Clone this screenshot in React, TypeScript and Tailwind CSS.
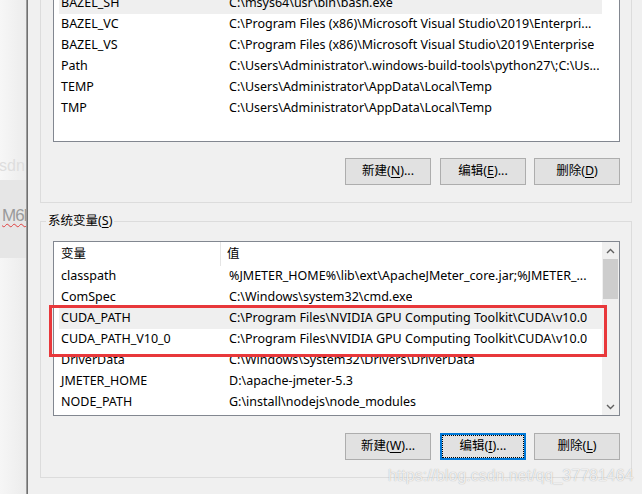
import React from "react";

const UI = "font-['Noto_Sans','Noto_Sans_CJK_SC',sans-serif] text-[12.5px] text-black";

const userVars = [
  { name: "BAZEL_SH", value: "C:\\msys64\\usr\\bin\\bash.exe", hl: true },
  { name: "BAZEL_VC", value: "C:\\Program Files (x86)\\Microsoft Visual Studio\\2019\\Enterpri..." },
  { name: "BAZEL_VS", value: "C:\\Program Files (x86)\\Microsoft Visual Studio\\2019\\Enterprise" },
  { name: "Path", value: "C:\\Users\\Administrator\\.windows-build-tools\\python27\\;C:\\Us..." },
  { name: "TEMP", value: "C:\\Users\\Administrator\\AppData\\Local\\Temp" },
  { name: "TMP", value: "C:\\Users\\Administrator\\AppData\\Local\\Temp" },
];

const sysVars = [
  { name: "classpath", value: "%JMETER_HOME%\\lib\\ext\\ApacheJMeter_core.jar;%JMETER_..." },
  { name: "ComSpec", value: "C:\\Windows\\system32\\cmd.exe" },
  { name: "CUDA_PATH", value: "C:\\Program Files\\NVIDIA GPU Computing Toolkit\\CUDA\\v10.0", hl: true },
  { name: "CUDA_PATH_V10_0", value: "C:\\Program Files\\NVIDIA GPU Computing Toolkit\\CUDA\\v10.0" },
  { name: "DriverData", value: "C:\\Windows\\System32\\Drivers\\DriverData" },
  { name: "JMETER_HOME", value: "D:\\apache-jmeter-5.3" },
  { name: "NODE_PATH", value: "G:\\install\\nodejs\\node_modules" },
];

function Row({ name, value, hl }: { name: string; value: string; hl?: boolean }) {
  return (
    <div className={`flex h-[21px] items-center ml-[5px] whitespace-nowrap ${hl ? "bg-[#efefef]" : ""}`}>
      <span className="w-[170px] shrink-0 pl-[2px]">{name}</span>
      <span className="overflow-hidden">{value}</span>
    </div>
  );
}

function Btn({ label, k, rest, focused }: { label: string; k: string; rest: string; focused?: boolean }) {
  const text = (
    <span>
      {label}(<span className="underline underline-offset-2">{k}</span>){rest}
    </span>
  );
  if (focused) {
    return (
      <div className="w-[86px] h-[27px] border-2 border-[#0078d7] bg-[#e1e1e1]">
        <div className="h-full w-full border border-dotted border-black flex items-center justify-center">{text}</div>
      </div>
    );
  }
  return (
    <div className="w-[86px] h-[27px] border border-[#adadad] bg-[#e1e1e1] flex items-center justify-center">{text}</div>
  );
}

function Chevron({ up }: { up?: boolean }) {
  return (
    <svg width="9" height="6" viewBox="0 0 9 6">
      <polyline
        points={up ? "1,5 4.5,1.5 8,5" : "1,1 4.5,4.5 8,1"}
        fill="none"
        stroke="#606060"
        strokeWidth="1.4"
      />
    </svg>
  );
}

export default function App() {
  return (
    <div className={`relative flex w-[642px] h-[494px] overflow-hidden ${UI}`}>
      {/* browser page peeking behind the dialog */}
      <div className="w-[26px] shrink-0 flex flex-col overflow-hidden bg-gradient-to-r from-[#f7f7f7] to-[#ececec]">
        <div className="h-[180px] flex flex-col justify-end pb-[5px]">
          <span className="-ml-[1px] whitespace-nowrap text-[16px] leading-[18px] text-[#dedede] font-['Liberation_Sans',sans-serif]">sdn.ne</span>
        </div>
        <div className="h-[78px] bg-[#e6e6e6] pt-[28px] pl-[2px]">
          <span className="whitespace-nowrap text-[17px] leading-[16px] tracking-[-1px] text-[#9a9a9a] font-['Liberation_Sans',sans-serif] underline decoration-wavy decoration-[#e04040] decoration-1 underline-offset-2">M6L</span>
        </div>
        <div className="flex-1 bg-gradient-to-r from-[#f6f6f6] to-[#ececec]" />
      </div>
      <div className="w-[1px] shrink-0 bg-[#9c9c9c]" />
      <div className="w-[1px] shrink-0 bg-[#707070]" />

      {/* dialog */}
      <div className="flex-1 bg-[#f0f0f0] pl-[12px] pr-[10px] flex flex-col">
        {/* user variables group */}
        <div className="-mt-[20px] h-[223px] shrink-0 border border-[#dcdcdc] pl-[12px] pr-[11px] flex flex-col">
          <div className="h-[161px] border border-[#828790] bg-white pt-[11px] overflow-hidden">
            {userVars.map((v) => (
              <div key={v.name} className="mr-[17px]">
                <Row {...v} />
              </div>
            ))}
          </div>
          <div className="mt-[16px] flex justify-end">
            <Btn label="新建" k="N" rest="..." />
            <div className="ml-[9px]"><Btn label="编辑" k="E" rest="..." /></div>
            <div className="ml-[8px]"><Btn label="删除" k="D" rest="" /></div>
          </div>
        </div>

        {/* system variables group */}
        <div className="mt-[18px] h-[257px] shrink-0 border border-[#dcdcdc] pl-[12px] pr-[11px] flex flex-col">
          <div className="-mt-[9px] ml-[-7px] w-fit bg-[#f0f0f0] px-[2px] leading-[16px]">
            系统变量(<span className="underline underline-offset-2">S</span>)
          </div>
          <div className="mt-[12px] h-[175px] border border-[#828790] bg-white flex">
            <div className="flex-1 flex flex-col">
              <div className="h-[24px] flex items-center whitespace-nowrap">
                <span className="w-[167px] pl-[7px] h-full flex items-center border-r border-[#e5e5e5]">变量</span>
                <span className="pl-[6px]">值</span>
              </div>
              {sysVars.map((v) => (
                <Row key={v.name} {...v} />
              ))}
            </div>
            <div className="w-[17px] bg-[#f0f0f0] flex flex-col items-center">
              <div className="h-[17px] flex items-center justify-center"><Chevron up /></div>
              <div className="w-[15px] h-[40px] bg-[#cdcdcd]" />
              <div className="flex-1" />
              <div className="h-[17px] flex items-center justify-center"><Chevron /></div>
            </div>
          </div>
          <div className="mt-[17px] flex justify-end">
            <Btn label="新建" k="W" rest="..." />
            <div className="ml-[9px]"><Btn label="编辑" k="I" rest="..." focused /></div>
            <div className="ml-[8px]"><Btn label="删除" k="L" rest="" /></div>
          </div>
        </div>
      </div>

      {/* red annotation */}
      <div className="absolute left-[49px] top-[305px] w-[558px] h-[52px] border-[3px] border-[#e8383b]" />

      {/* watermark */}
      <div className="absolute left-[388px] top-[466px] whitespace-nowrap text-[16px] leading-[20px] font-['Liberation_Sans',sans-serif] text-white/80 [text-shadow:0_0_1px_rgba(0,0,0,0.35)]">
        https://blog.csdn.net/qq_37781464
      </div>
    </div>
  );
}
